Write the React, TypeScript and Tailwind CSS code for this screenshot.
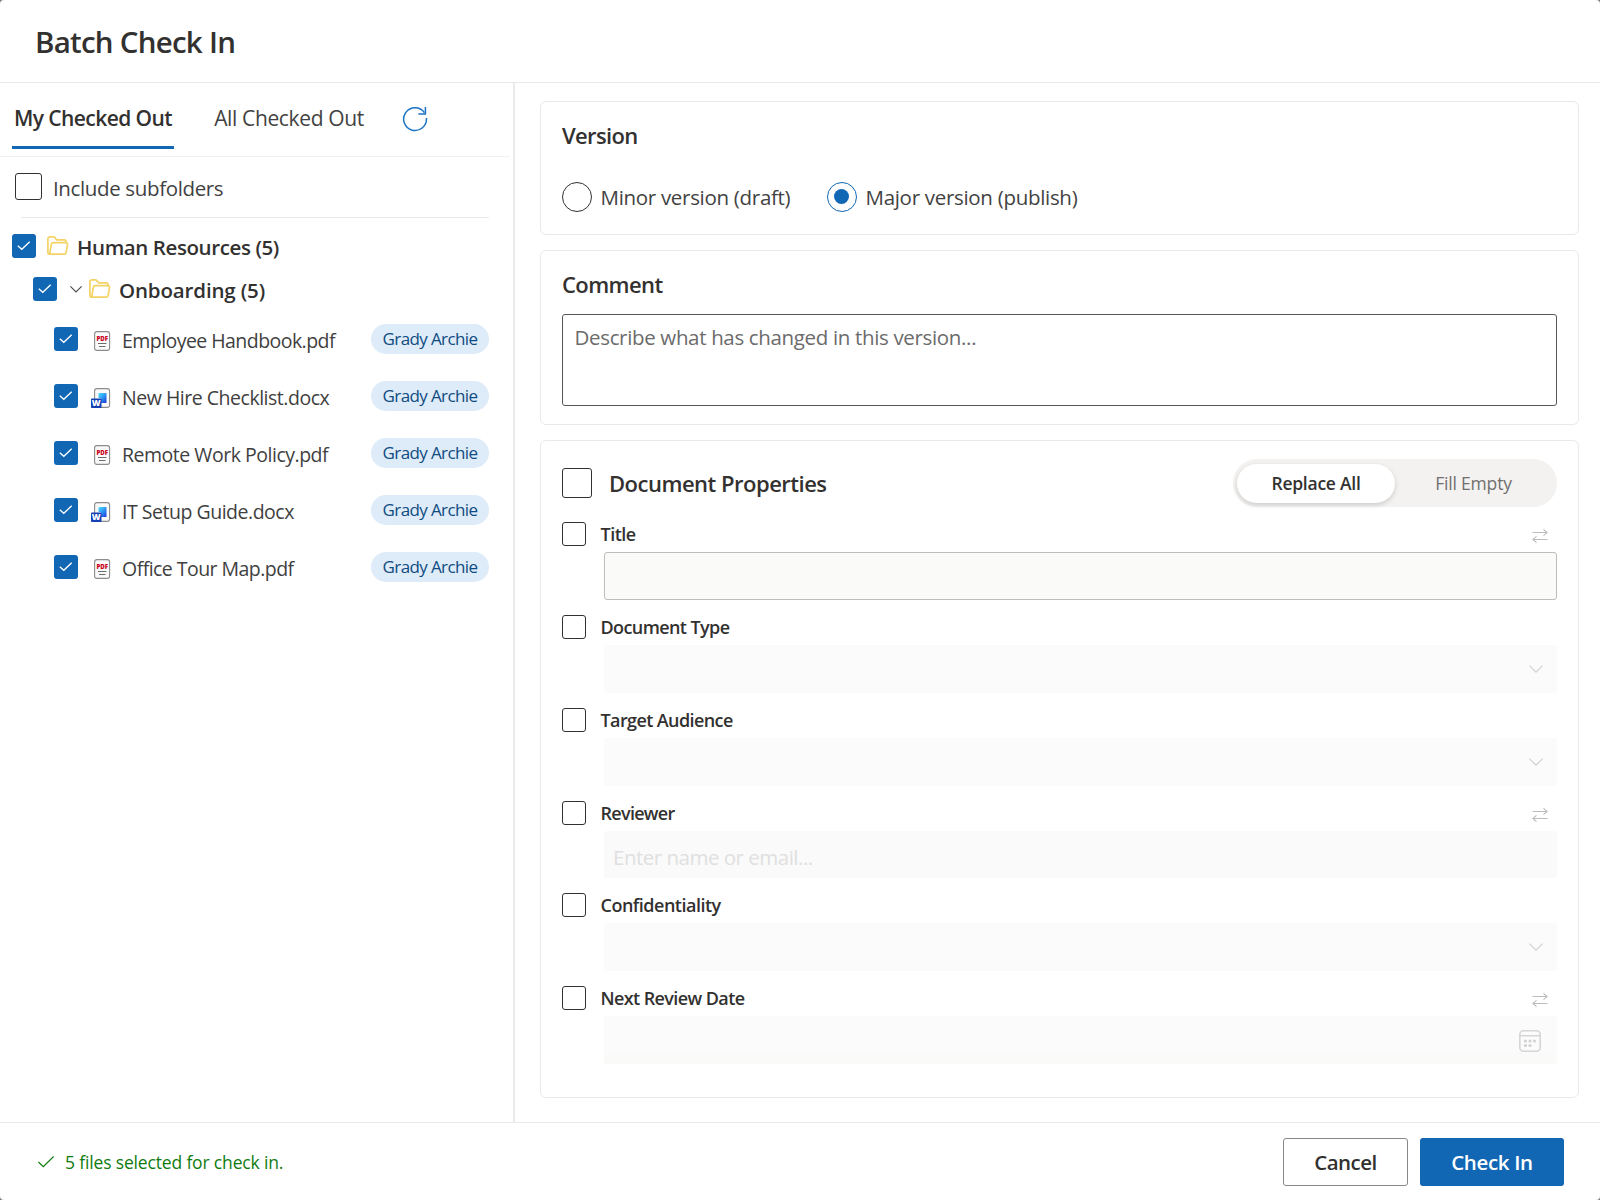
import React, { useState } from "react";

interface FileItem {
    name: string;
    type: "pdf" | "docx";
    user: string;
    tracking: string;
}

interface Field {
    label: string;
    kind: "text" | "select" | "person" | "date";
    swap: boolean;
    tracking: string;
}

const files: FileItem[] = [
    { name: "Employee Handbook.pdf", type: "pdf", user: "Grady Archie", tracking: "tracking-[-0.55px]" },
    { name: "New Hire Checklist.docx", type: "docx", user: "Grady Archie", tracking: "tracking-[-0.48px]" },
    { name: "Remote Work Policy.pdf", type: "pdf", user: "Grady Archie", tracking: "tracking-[-0.48px]" },
    { name: "IT Setup Guide.docx", type: "docx", user: "Grady Archie", tracking: "tracking-[-0.48px]" },
    { name: "Office Tour Map.pdf", type: "pdf", user: "Grady Archie", tracking: "tracking-[-0.54px]" },
];

const fields: Field[] = [
    { label: "Title", kind: "text", swap: true, tracking: "tracking-[-0.5px]" },
    { label: "Document Type", kind: "select", swap: false, tracking: "tracking-[-0.6px]" },
    { label: "Target Audience", kind: "select", swap: false, tracking: "tracking-[-0.6px]" },
    { label: "Reviewer", kind: "person", swap: true, tracking: "tracking-[-0.7px]" },
    { label: "Confidentiality", kind: "select", swap: false, tracking: "tracking-[-0.5px]" },
    { label: "Next Review Date", kind: "date", swap: true, tracking: "tracking-[-0.6px]" },
];

const CheckedBox = ({ className = "" }: { className?: string }) => (
    <span className={`flex h-6 w-6 shrink-0 items-center justify-center rounded-[3px] bg-[#1267b4] ${className}`}>
        <svg width="24" height="24" viewBox="0 0 24 24" fill="none" stroke="#fff" strokeWidth="1.3">
            <path d="M5.8 11.8 9.8 15.3 17.7 7.8" />
        </svg>
    </span>
);

const FolderIcon = () => (
    <svg className="shrink-0" width="22" height="20" viewBox="0 0 22 20" fill="none" stroke="#f4d364" strokeWidth="1.7" strokeLinejoin="round">
        <path d="M2.6 18.2A1.8 1.8 0 0 1 .9 16.4V2.6A1.8 1.8 0 0 1 2.7.9H7l2.8 2.9h7.4a1.8 1.8 0 0 1 1.8 1.8v1" />
        <path d="M2.6 18.2h14.6a1.9 1.9 0 0 0 1.9-1.6l1.4-8.2a1.6 1.6 0 0 0-1.6-1.8H6.3a1.9 1.9 0 0 0-1.9 1.5L2.6 18.2z" />
    </svg>
);

const RefreshIcon = () => (
    <svg width="26" height="26" viewBox="0 0 26 26" fill="none" stroke="#1a73c4" strokeWidth="1.5">
        <path d="M24.4 12A11.4 11.4 0 1 1 22.4 6.6" />
        <path d="M23.4 1v7h-7" />
    </svg>
);

const PdfIcon = () => (
    <svg width="20" height="20" viewBox="0 0 20 20">
        <rect x="3.6" y=".6" width="15" height="18.8" rx="2.4" fill="#fafafa" stroke="#8c8c8c" strokeWidth="1.1" />
        <text x="11.2" y="9.6" textAnchor="middle" fontSize="7.2" fontWeight="800" fill="#c8001c" textLength="11.6" lengthAdjust="spacingAndGlyphs">
            PDF
        </text>
        <path d="M7 12.5h8.5M8 15.5h6.5" stroke="#6d6d6d" strokeWidth="1" />
    </svg>
);

const WordIcon = () => (
    <svg width="20" height="20" viewBox="0 0 20 20">
        <defs>
            <linearGradient id="doc" x1="0" y1="0" x2=".8" y2="1">
                <stop offset="0" stopColor="#4fe0fa" />
                <stop offset=".5" stopColor="#2f9bf5" />
                <stop offset="1" stopColor="#1b49e0" />
            </linearGradient>
        </defs>
        <rect x="3.6" y=".6" width="15" height="18.8" rx="2.4" fill="#fafafa" stroke="#8c8c8c" strokeWidth="1.1" />
        <path d="M7.5 5h8v10H10v-5H7.5z" fill="url(#doc)" />
        <rect x="0" y="10.5" width="10.5" height="9.5" rx=".8" fill="#1540b4" />
        <text x="5.2" y="18.3" textAnchor="middle" fontSize="8.5" fontWeight="800" fill="#fff">
            W
        </text>
    </svg>
);

const SwapIcon = () => (
    <svg width="16" height="14" viewBox="0 0 16 14" fill="none" stroke="#bdbdbd" strokeWidth="1.1">
        <path d="M.5 3.5h15M11.5.3l3.6 3.2-3.6 3.2" />
        <path d="M15.5 10.5H.5M4.5 7.3.9 10.5l3.6 3.2" />
    </svg>
);

const ChevronIcon = () => (
    <svg width="14" height="8" viewBox="0 0 14 8" fill="none" stroke="#d2d2d2" strokeWidth="1.2">
        <path d="M.4.6 7 7.2 13.6.6" />
    </svg>
);

const CalendarIcon = () => (
    <svg width="22" height="22" viewBox="0 0 22 22" fill="none" stroke="#d6d6d6" strokeWidth="1.6">
        <rect x=".8" y=".8" width="20.4" height="20.4" rx="3.8" />
        <path d="M.8 5.7h20.4" />
        <g fill="#d2d2d2" stroke="none">
            <circle cx="6.5" cy="11" r="1.6" />
            <circle cx="11" cy="11" r="1.6" />
            <circle cx="15.5" cy="11" r="1.6" />
            <circle cx="6.5" cy="15.5" r="1.6" />
            <circle cx="11" cy="15.5" r="1.6" />
        </g>
    </svg>
);

const FileRow = ({ file }: { file: FileItem }) => (
    <div className="flex h-[57px] items-start pr-6 pl-[54px]">
        <CheckedBox className="mt-4" />
        <span className="mt-5 ml-[13px]">{file.type === "pdf" ? <PdfIcon /> : <WordIcon />}</span>
        <span className={`mt-4 ml-[11px] text-[19.5px] leading-7 text-[#3f3f3f] ${file.tracking}`}>{file.name}</span>
        <span className="mt-[13px] ml-auto flex h-[30px] w-[118px] items-center justify-center rounded-full bg-[#deebf9] text-[17px] tracking-[-0.62px] text-[#0f4c81]">
            {file.user}
        </span>
    </div>
);

const FieldRow = ({ field }: { field: Field }) => (
    <div>
        <div className="flex h-[30px] items-start">
            <span className="h-6 w-6 shrink-0 rounded-[3px] border border-[#323130]" />
            <span className={`ml-[14.5px] text-[18px] leading-6 font-semibold text-[#323130] ${field.tracking}`}>{field.label}</span>
            {field.swap && (
                <span className="mt-[7px] mr-[9px] ml-auto">
                    <SwapIcon />
                </span>
            )}
        </div>
        {field.kind === "text" && <div className="ml-[42px] h-12 rounded-[3px] border border-[#bdbdbb] bg-[#fafaf8]" />}
        {field.kind === "select" && (
            <div className="ml-[42px] flex h-12 items-center justify-end rounded-[3px] bg-[#fbfbfb] pr-[14.5px]">
                <ChevronIcon />
            </div>
        )}
        {field.kind === "person" && (
            <div className="ml-[42px] flex h-[47px] items-center rounded-[3px] bg-[#fafafa] pt-[5px] pl-[9px] text-[20.5px] tracking-[-0.5px] text-[#e0e0e0]">
                Enter name or email...
            </div>
        )}
        {field.kind === "date" && (
            <div className="ml-[42px] flex h-12 items-center justify-end rounded-[3px] border-b-[11px] border-[#fafaf8] bg-[#fbfbfb] pt-3 pr-4">
                <CalendarIcon />
            </div>
        )}
    </div>
);

const App: React.FC = () => {
    const [tab, setTab] = useState<"my" | "all">("my");
    const [major, setMajor] = useState(true);

    return (
        <div className="h-[1200px] w-[1600px] overflow-hidden bg-[#7a7a7a] font-['Open_Sans','Noto_Sans',sans-serif] whitespace-nowrap">
            <div className="flex h-full flex-col overflow-hidden rounded-[4px] bg-white">
                <header className="flex h-[83px] shrink-0 items-center border-b border-[#e9e9e9] pt-0.5 pl-[35px]">
                    <h1 className="text-[29.5px] font-semibold tracking-[-0.75px] text-[#323130]">Batch Check In</h1>
                </header>

                <main className="flex min-h-0 flex-1">
                    <aside className="w-[515px] shrink-0 border-r-2 border-[#ebebeb]">
                        <div className="mr-[3px] flex h-[74px] items-start border-b border-[#f0f0f0] pl-3">
                            <button
                                onClick={() => setTab("my")}
                                className={`h-[66px] w-[162px] border-b-[3px] pt-2 text-[21px] tracking-[-0.58px] text-[#323130] ${tab === "my" ? "border-[#1267b4] font-semibold" : "border-transparent"}`}
                            >
                                My Checked Out
                            </button>
                            <button
                                onClick={() => setTab("all")}
                                className={`ml-[34px] h-[66px] w-[162px] border-b-[3px] pt-2 text-[21px] tracking-[-0.36px] text-[#424242] ${tab === "all" ? "border-[#1267b4] font-semibold" : "border-transparent"}`}
                            >
                                All Checked Out
                            </button>
                            <span className="mt-[23px] ml-8">
                                <RefreshIcon />
                            </span>
                        </div>
                        <div className="flex h-[60px] items-center pb-px pl-[15px]">
                            <span className="h-[27px] w-[27px] rounded-[3px] border border-[#323130]" />
                            <span className="ml-[11px] pt-[3px] text-[20.5px] tracking-[-0.36px] text-[#424242]">Include subfolders</span>
                        </div>
                        <div className="mr-6 ml-[21px] h-px bg-[#e9e9e9]" />
                        <div className="mt-[7px] flex h-[42px] items-center pl-3">
                            <CheckedBox />
                            <span className="ml-[11px]">
                                <FolderIcon />
                            </span>
                            <span className="ml-2 pt-[2px] text-[20.5px] font-semibold tracking-[-0.4px] text-[#323130]">Human Resources (5)</span>
                        </div>
                        <div className="flex h-11 items-center pl-[33px]">
                            <CheckedBox />
                            <svg className="ml-[13px]" width="12" height="7" viewBox="0 0 12 7" fill="none" stroke="#4a4a4a" strokeWidth="1.1">
                                <path d="M.4.4 6 6 11.6.4" />
                            </svg>
                            <span className="ml-[7px]">
                                <FolderIcon />
                            </span>
                            <span className="ml-2 pt-[2px] text-[20.5px] font-semibold tracking-[-0.15px] text-[#323130]">Onboarding (5)</span>
                        </div>
                        {files.map((file) => (
                            <FileRow key={file.name} file={file} />
                        ))}
                    </aside>

                    <section className="flex flex-1 flex-col gap-[15px] pt-[18px] pr-[21px] pl-[25px]">
                        <div className="h-[134px] rounded-md border border-[#e9e9e9] px-[21px] pt-[17px]">
                            <h2 className="text-[22px] leading-8 font-semibold tracking-[-0.65px] text-[#323130]">Version</h2>
                            <div className="mt-[31px] flex h-[30px] items-center text-[20.5px] text-[#424242]">
                                <button onClick={() => setMajor(false)} className="flex w-[265px] items-center">
                                    <span className="flex h-[30px] w-[30px] items-center justify-center rounded-full border border-[#323130]">
                                        {!major && <span className="h-[15px] w-[15px] rounded-full bg-[#1267b4]" />}
                                    </span>
                                    <span className="ml-[8.5px] tracking-[-0.3px]">Minor version (draft)</span>
                                </button>
                                <button onClick={() => setMajor(true)} className="flex items-center">
                                    <span className="flex h-[30px] w-[30px] items-center justify-center rounded-full border border-[#1267b4]">
                                        {major && <span className="mr-px mb-px h-[15px] w-[15px] rounded-full bg-[#1267b4]" />}
                                    </span>
                                    <span className="ml-[8.5px] tracking-[-0.3px]">Major version (publish)</span>
                                </button>
                            </div>
                        </div>

                        <div className="h-[175px] rounded-md border border-[#e9e9e9] px-[21px] pt-[17px]">
                            <h2 className="text-[22px] leading-8 font-semibold tracking-[-0.6px] text-[#323130]">Comment</h2>
                            <div className="mt-[14px] h-[92px] rounded-[3px] border border-[#55565a] px-[11.5px] pt-[6px] text-[20.5px] leading-8 tracking-[-0.34px] text-[#6b6b6b]">
                                Describe what has changed in this version...
                            </div>
                        </div>

                        <div className="h-[658px] rounded-md border border-[#e9e9e9] px-[21px] pt-[18px]">
                            <div className="flex h-12 items-center">
                                <span className="h-[30px] w-[30px] rounded-[3px] border border-[#323130]" />
                                <h2 className="ml-[17px] pt-px text-[22px] font-semibold tracking-[-0.5px] text-[#323130]">Document Properties</h2>
                                <div className="ml-auto flex h-12 w-[324px] items-center rounded-full bg-[#f3f2f1] pl-1 text-[17.5px]">
                                    <button className="h-[39px] w-[158px] rounded-full bg-white font-semibold tracking-[-0.25px] text-[#323130] shadow-[0_2px_5px_rgba(0,0,0,0.16)]">
                                        Replace All
                                    </button>
                                    <button className="flex-1 pr-[5px] tracking-[-0.2px] text-[#706f6e]">Fill Empty</button>
                                </div>
                            </div>
                            <div className="mt-[15px] flex flex-col gap-[15px]">
                                {fields.map((field) => (
                                    <FieldRow key={field.label} field={field} />
                                ))}
                            </div>
                        </div>
                    </section>
                </main>

                <footer className="flex h-[78px] shrink-0 items-start border-t border-[#e9e9e9] pt-[15px] pr-9 pl-[38px]">
                    <div className="flex h-12 items-center text-[17.5px] text-[#107c10]">
                        <svg width="16" height="12" viewBox="0 0 16 12" fill="none" stroke="currentColor" strokeWidth="1.2">
                            <path d="M.4 6 5.3 10.7 15.6.5" />
                        </svg>
                        <span className="ml-[11px] tracking-[-0.16px]">5 files selected for check in.</span>
                    </div>
                    <div className="ml-auto flex gap-3 text-[20.5px] font-semibold">
                        <button className="h-12 w-[125px] rounded-[3px] border border-[#8a8886] tracking-[-0.5px] text-[#323130]">Cancel</button>
                        <button className="h-12 w-36 rounded-[3px] bg-[#1267b4] tracking-[-0.35px] text-white">Check In</button>
                    </div>
                </footer>
            </div>
        </div>
    );
};

export default App;
